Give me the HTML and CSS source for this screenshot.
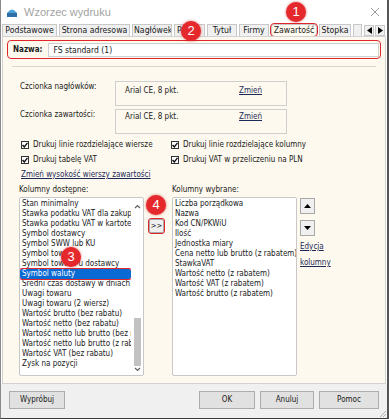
FILE: index.html
```html
<!DOCTYPE html>
<html lang="pl">
  <head>
    <meta charset="UTF-8" />
    <title>Wzorzec wydruku</title>
    <link rel="stylesheet" href="styles.css">
  </head>
  <body>
    <div class="window">
      <div class="titlebar">
        <svg class="app-icon" width="12" height="12" viewBox="0 0 12 12">
          <path d="M1 7 Q6 0 11 7 Z" fill="#4a9fd8" />
          <rect x="1" y="7" width="10" height="4" fill="#2f6fa8" />
        </svg>
        <span class="title">Wzorzec wydruku</span>
        <svg class="close" width="10" height="10" viewBox="0 0 10 10">
          <path d="M1 1 L9 9 M9 1 L1 9" stroke="#9a9a9a" stroke-width="1" />
        </svg>
      </div>

      <div class="tabs">
        <span class="tab">Podstawowe</span>
        <span class="tab">Strona adresowa</span>
        <span class="tab">Nagłówek</span>
        <span class="tab">Pasy</span>
        <span class="tab">Tytuł</span>
        <span class="tab">Firmy</span>
        <span class="tab active">Zawartość</span>
        <span class="tab">Stopka</span>
        <span class="tab"></span>
        <span class="tab-arrows">
          <span class="tab-arrow"><svg width="5" height="7" viewBox="0 0 5 7"><path d="M5 0 L0 3.5 L5 7 Z" fill="#000" /></svg></span>
          <span class="tab-arrow"><svg width="5" height="7" viewBox="0 0 5 7"><path d="M0 0 L5 3.5 L0 7 Z" fill="#000" /></svg></span>
        </span>
      </div>

      <div class="page">
        <div class="name-row">
          <b>Nazwa:</b>
          <span class="name-input">FS standard (1)</span>
        </div>
        <div class="sep"></div>

        <div class="font-row">
          <span class="font-label">Czcionka nagłówków:</span>
          <div class="font-box first">
            <span>Arial CE, 8 pkt.</span>
            <span class="link">Zmień</span>
          </div>
        </div>
        <div class="font-row">
          <span class="font-label">Czcionka zawartości:</span>
          <div class="font-box">
            <span>Arial CE, 8 pkt.</span>
            <span class="link">Zmień</span>
          </div>
        </div>

        <div class="checks">
          <label class="check"><span class="box"><svg width="6" height="6" viewBox="0 0 6 6"><path d="M0.5 3 L2.3 5 L5.5 0.8" fill="none" stroke="#111" stroke-width="1.4" /></svg></span>Drukuj linie rozdzielające wiersze</label>
          <label class="check"><span class="box"><svg width="6" height="6" viewBox="0 0 6 6"><path d="M0.5 3 L2.3 5 L5.5 0.8" fill="none" stroke="#111" stroke-width="1.4" /></svg></span>Drukuj linie rozdzielające kolumny</label>
          <label class="check"><span class="box"><svg width="6" height="6" viewBox="0 0 6 6"><path d="M0.5 3 L2.3 5 L5.5 0.8" fill="none" stroke="#111" stroke-width="1.4" /></svg></span>Drukuj tabelę VAT</label>
          <label class="check"><span class="box"><svg width="6" height="6" viewBox="0 0 6 6"><path d="M0.5 3 L2.3 5 L5.5 0.8" fill="none" stroke="#111" stroke-width="1.4" /></svg></span>Drukuj VAT w przeliczeniu na PLN</label>
        </div>
        <div class="row-link"><span class="link">Zmień wysokość wierszy zawartości</span></div>

        <div class="columns">
          <div class="col">
            <div class="col-title">Kolumny dostępne:</div>
            <div class="list">
              <div class="items">
                <div>Stan minimalny</div>
                <div>Stawka podatku VAT dla zakupu</div>
                <div>Stawka podatku VAT w kartotece</div>
                <div>Symbol dostawcy</div>
                <div>Symbol SWW lub KU</div>
                <div>Symbol towaru</div>
                <div>Symbol towaru u dostawcy</div>
                <div class="selected">Symbol waluty</div>
                <div>Średni czas dostawy w dniach</div>
                <div>Uwagi towaru</div>
                <div>Uwagi towaru (2 wiersz)</div>
                <div>Wartość brutto (bez rabatu)</div>
                <div>Wartość netto (bez rabatu)</div>
                <div>Wartość netto lub brutto (bez rabatu)</div>
                <div>Wartość netto lub brutto (z rabatem)</div>
                <div>Wartość VAT (bez rabatu)</div>
                <div>Zysk na pozycji</div>
              </div>
              <div class="scrollbar">
                <svg width="7" height="5" viewBox="0 0 7 5"><path d="M1 4 L3.5 1.5 L6 4" fill="none" stroke="#606060" stroke-width="1.2" /></svg>
                <div class="track"><div class="thumb"></div></div>
                <svg width="7" height="5" viewBox="0 0 7 5"><path d="M1 1 L3.5 3.5 L6 1" fill="none" stroke="#606060" stroke-width="1.2" /></svg>
              </div>
            </div>
          </div>

          <div class="mid">
            <span class="btn-small">&gt;&gt;</span>
          </div>

          <div class="col">
            <div class="col-title">Kolumny wybrane:</div>
            <div class="list">
              <div class="items">
                <div>Liczba porządkowa</div>
                <div>Nazwa</div>
                <div>Kod CN/PKWiU</div>
                <div>Ilość</div>
                <div>Jednostka miary</div>
                <div>Cena netto lub brutto (z rabatem)</div>
                <div>StawkaVAT</div>
                <div>Wartość netto (z rabatem)</div>
                <div>Wartość VAT (z rabatem)</div>
                <div>Wartość brutto (z rabatem)</div>
              </div>
            </div>
          </div>

          <div class="side">
            <span class="move"><svg width="7" height="4" viewBox="0 0 7 4"><path d="M0 4 L3.5 0 L7 4 Z" fill="#000" /></svg></span>
            <span class="move"><svg width="7" height="4" viewBox="0 0 7 4"><path d="M0 0 L3.5 4 L7 0 Z" fill="#000" /></svg></span>
            <span class="link">Edycja</span>
            <span class="link">kolumny</span>
          </div>
        </div>
      </div>

      <div class="footer">
        <span class="btn">Wypróbuj</span>
        <span class="spacer"></span>
        <span class="btn">OK</span>
        <span class="btn narrow">Anuluj</span>
        <span class="btn wide">Pomoc</span>
      </div>

      <svg class="grip" width="9" height="9" viewBox="0 0 9 9">
        <path d="M8 2 L2 8 M8 5 L5 8" stroke="#b0b0b0" stroke-width="1" />
      </svg>

      <span class="badge b1">1</span>
      <span class="badge b2">2</span>
      <span class="badge b3">3</span>
      <span class="badge b4">4</span>
    </div>
  </body>
</html>
```

FILE: styles.css
```css
* {
  box-sizing: border-box;
}

body {
  margin: 0;
  background: #ffffff;
  font-family: "DejaVu Sans Condensed", "DejaVu Sans", sans-serif;
  font-stretch: condensed;
  font-size: 8px;
  line-height: 10px;
  color: #1a1a1a;
}

.window {
  position: relative;
  width: 389px;
  height: 419px;
  border-left: 1px solid #8a8a8a;
  border-right: 2px solid #555555;
  border-bottom: 1px solid #3a3a3a;
  display: flex;
  flex-direction: column;
  overflow: hidden;
}

.titlebar {
  height: 24px;
  flex: none;
  display: flex;
  align-items: center;
  padding-left: 5px;
  gap: 6px;
}
.title {
  font-family: "Liberation Sans", sans-serif;
  font-stretch: normal;
  font-size: 11px;
  color: #a3a3a3;
  flex: 1;
}
.close {
  margin-right: 7px;
}

.tabs {
  height: 12px;
  flex: none;
  display: flex;
  align-items: flex-end;
  gap: 2px;
  padding-left: 1px;
}
.tab {
  flex: none;
  height: 12px;
  line-height: 11px;
  padding: 0 1px;
  font-size: 8.7px;
  text-align: center;
  background: #f0f0f0;
  border: 1px solid #c8c8c8;
  border-bottom: none;
  white-space: nowrap;
  overflow: hidden;
}
.tab:nth-child(1) { width: 55px; }
.tab:nth-child(2) { width: 71px; }
.tab:nth-child(3) { width: 40px; }
.tab:nth-child(4) { width: 31px; text-align: left; padding-left: 2px; }
.tab:nth-child(5) { width: 30px; }
.tab:nth-child(6) { width: 30px; }
.tab:nth-child(7) { width: 46px; }
.tab:nth-child(8) { width: 32px; }
.tab:nth-child(9) { width: 9px; }
.tab.active {
  background: #fdf9ee;
  outline: 1.5px solid #e0262b;
  border-radius: 3px;
}
.tab-arrows {
  margin-left: auto;
  margin-right: 2px;
  display: flex;
  gap: 1px;
  align-self: flex-start;
  margin-top: 1px;
}
.tab-arrow {
  width: 10px;
  height: 11px;
  display: flex;
  align-items: center;
  justify-content: center;
  border: 1px solid #c8c8c8;
  background: #f0f0f0;
}

.page {
  height: 348px;
  flex: none;
  margin: 0 1px;
  background: #fdf9ee;
  border: 1px solid #d2d2d2;
  padding: 3px 4px 0 4px;
}

.name-row {
  display: flex;
  align-items: center;
  gap: 6px;
  height: 19px;
  padding: 0 1px 0 5px;
  border: 1.5px solid #e0262b;
  border-radius: 4px;
}
.name-input {
  flex: 1;
  height: 14px;
  line-height: 12px;
  padding-left: 4px;
  font-size: 8.5px;
  background: #ffffff;
  border: 1px solid #d0d0d0;
}
.sep {
  height: 1px;
  background: #d9d6cc;
  margin: 7px 5px 14px 5px;
}

.font-row {
  display: flex;
  margin-left: 13px;
  margin-bottom: 3px;
}
.font-label {
  width: 95px;
  padding-top: 1px;
}
.font-box {
  width: 172px;
  height: 25px;
  border: 1px solid #cfcfcf;
  padding: 2px 24px 0 9px;
  display: flex;
  justify-content: space-between;
}
.font-box.first {
  padding-top: 4px;
}

.link {
  color: #1c2a57;
  text-decoration: underline;
}

.checks {
  display: grid;
  grid-template-columns: 150px 1fr;
  row-gap: 5px;
  margin: 6px 0 0 14px;
}
.check {
  display: flex;
  align-items: center;
  gap: 4px;
  height: 10px;
}
.box {
  width: 8px;
  height: 8px;
  border: 1px solid #333;
  background: #fff;
  display: flex;
  align-items: center;
  justify-content: center;
}

.row-link {
  margin: 5px 0 0 14px;
}

.columns {
  display: flex;
  margin: 5px 0 0 12px;
}
.col-title {
  height: 9px;
  line-height: 9px;
  margin-bottom: 3px;
}
.list {
  background: #ffffff;
  border: 1px solid #c8c8c8;
  border-radius: 2px;
  height: 179px;
  width: 125px;
  overflow: hidden;
  display: flex;
}
.items {
  flex: 1;
  min-width: 0;
  padding-top: 1px;
  overflow: hidden;
}
.items div {
  height: 10px;
  line-height: 10px;
  padding-left: 2px;
  white-space: nowrap;
  overflow: hidden;
}
.items .selected {
  background: #0a6ad4;
  color: #ffffff;
  outline: 1.5px solid #e0262b;
  border-radius: 2px;
}
.scrollbar {
  width: 12px;
  flex: none;
  display: flex;
  flex-direction: column;
  align-items: center;
  padding: 6px 0 3px 0;
}
.track {
  flex: 1;
  width: 7px;
  display: flex;
  flex-direction: column;
  justify-content: flex-end;
}
.thumb {
  height: 48px;
  margin-bottom: 1px;
  background: #c2c2c2;
}

.mid {
  width: 28px;
  padding: 34px 0 0 5px;
  display: flex;
}
.btn-small {
  width: 15px;
  height: 14px;
  line-height: 12px;
  text-align: center;
  background: #f0f0f0;
  border: 1px solid #a8a8a8;
  font-size: 7.5px;
  outline: 1.5px solid #e0262b;
  border-radius: 2px;
}

.side {
  display: flex;
  flex-direction: column;
  padding: 13px 0 0 3px;
  gap: 6px;
}
.move {
  width: 15px;
  height: 16px;
  display: flex;
  align-items: center;
  justify-content: center;
  background: #f0f0f0;
  border: 1px solid #a8a8a8;
}

.footer {
  flex: 1;
  background: #f0f0f0;
  display: flex;
  align-items: flex-start;
  gap: 5px;
  padding: 7px 8px 0 8px;
}
.spacer {
  flex: 1;
}
.btn {
  width: 56px;
  height: 18px;
  line-height: 16px;
  text-align: center;
  background: #e1e1e1;
  border: 1px solid #adadad;
}
.btn.narrow {
  width: 54px;
}
.btn.wide {
  width: 60px;
}

.grip {
  position: absolute;
  right: 0;
  bottom: 0;
}

.badge {
  position: absolute;
  width: 20px;
  height: 20px;
  border-radius: 50%;
  background: #e4282b;
  color: #ffffff;
  font-family: "Liberation Sans", sans-serif;
  font-stretch: normal;
  font-size: 13px;
  line-height: 20px;
  text-align: center;
  box-shadow: 0 0 3px rgba(200, 0, 0, 0.6);
}
.b1 { left: 285px; top: 2px; }
.b2 { left: 180px; top: 21px; }
.b3 { left: 60px; top: 247px; }
.b4 { left: 145px; top: 195px; }
```
